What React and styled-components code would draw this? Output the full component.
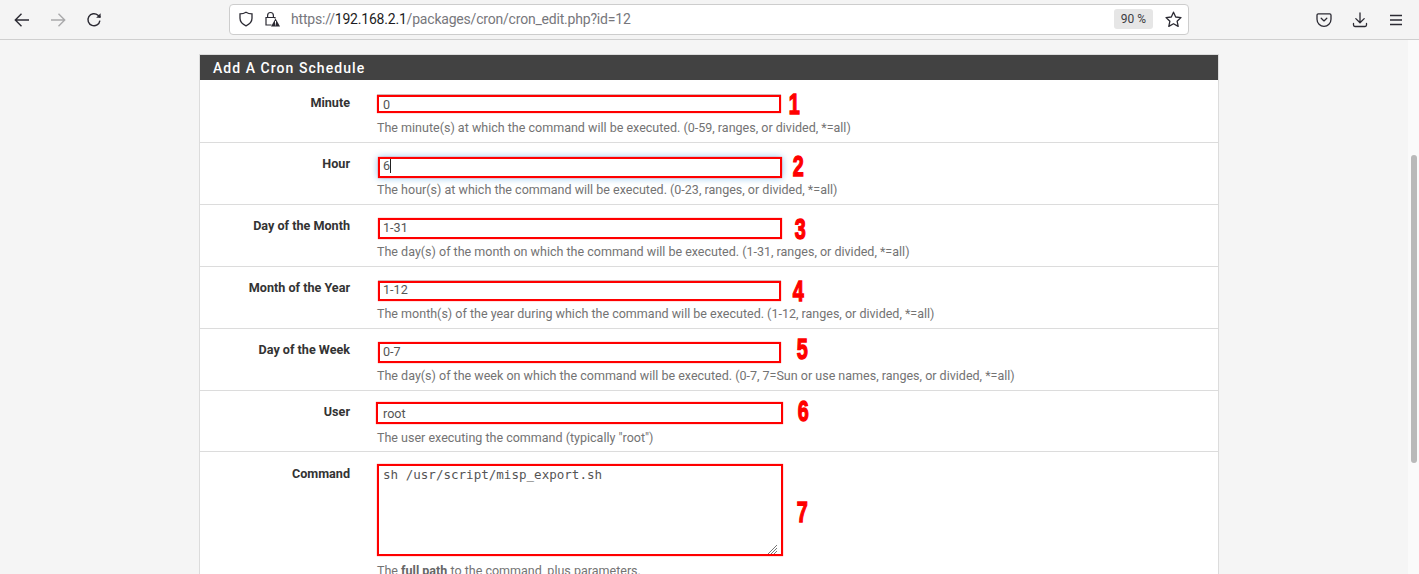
import React from "react";
import styled, { createGlobalStyle } from "styled-components";

const GlobalStyle = createGlobalStyle`
  html, body {
    margin: 0;
    padding: 0;
    height: 574px;
    overflow: hidden;
    background: #f5f5f5;
  }
  * { box-sizing: border-box; }
`;

const Window = styled.div`
  width: 1419px;
  height: 574px;
  display: flex;
  flex-direction: column;
  overflow: hidden;
  font-family: Roboto, "Liberation Sans", sans-serif;
`;

// browser chrome
const Toolbar = styled.header`
  height: 40px;
  flex: none;
  display: flex;
  align-items: center;
  background: #f4f4f4;
  border-bottom: 1px solid #cfcfcf;
  font-family: Roboto, "Noto Sans", sans-serif;
`;
const NavGroup = styled.nav`
  width: 229px;
  flex: none;
  display: flex;
  padding-left: 4px;
`;
const ToolButton = styled.span`
  width: 36px;
  height: 28px;
  display: flex;
  align-items: center;
  justify-content: center;
  color: ${(p) => (p.$off ? "#a9a9ab" : "#2b2a33")};
  svg { display: block; }
`;
const UrlBar = styled.div`
  width: 960px;
  height: 31px;
  flex: none;
  display: flex;
  align-items: center;
  margin-top: -1px;
  padding: 0 6px 0 8px;
  background: #fff;
  border: 1px solid #cdcdcd;
  border-radius: 4px;
`;
const UrlIcon = styled.span`
  width: ${(p) => p.$w}px;
  flex: none;
  display: flex;
  color: #2b2a33;
`;
const UrlText = styled.span`
  flex: 1;
  font-size: 14px;
  letter-spacing: -0.2px;
  color: #77777c;
  white-space: nowrap;
  b { font-weight: 400; color: #1d1c22; }
`;
const ZoomChip = styled.span`
  width: 39px;
  height: 20px;
  display: flex;
  align-items: center;
  justify-content: center;
  margin-right: 12px;
  border-radius: 3px;
  background: #e6e6e6;
  font-size: 12px;
  color: #3c3c42;
`;
const RightIcons = styled.div`
  flex: 1;
  display: flex;
  justify-content: flex-end;
  padding-right: 5px;
`;

// page below the toolbar
const Viewport = styled.div`
  flex: 1;
  min-height: 0;
  display: flex;
  overflow: hidden;
`;
const Content = styled.main`
  flex: 1;
  padding: 14px 189px 0 199px;
  overflow: hidden;
`;
const Scrollbar = styled.div`
  width: 11px;
  flex: none;
  padding: 115px 2px 0 3px;
  background: #fafafa;
`;
const ScrollThumb = styled.div`
  height: 308px;
  border-radius: 3px;
  background: #b9b9b9;
`;
const Panel = styled.section`
  background: #fff;
  border: 1px solid #dcdcdc;
  border-bottom: 0;
`;
const PanelTitle = styled.h2`
  height: 25px;
  margin: 0;
  padding: 5px 0 0 13px;
  background: #424242;
  color: #fff;
  font-size: 14px;
  line-height: 16px;
  font-weight: 500;
  letter-spacing: 1.05px;
`;
const Row = styled.div`
  height: ${(p) => p.$h}px;
  display: grid;
  grid-template-columns: 177px 1fr;
  border-top: ${(p) => (p.$first ? "0" : "1px solid #dcdcdc")};
`;
const Label = styled.label`
  padding: ${(p) => (p.$first ? "15px" : p.$low ? "14px" : "13px")} 27px 0 0;
  text-align: right;
  font-size: 12.6px;
  line-height: 16px;
  font-weight: 700;
  color: #333;
`;
const Field = styled.div`
  position: relative;
  padding-top: ${(p) => (p.$first ? "16px" : "14px")};
`;
const TextBox = styled.div`
  width: 403px;
  height: 18px;
  padding: 0 6px;
  font-size: 12.6px;
  line-height: 18px;
  color: #555;
`;
const Caret = styled.span`
  display: inline-block;
  width: 1px;
  height: 15px;
  vertical-align: -3px;
  background: #222;
`;
const AreaBox = styled.div`
  position: relative;
  width: 403px;
  height: 91px;
  padding: 1px 6px;
  font-family: "DejaVu Sans Mono", "Liberation Mono", monospace;
  font-size: 12.55px;
  line-height: 15px;
  color: #555;
`;
const Grip = styled.svg`
  position: absolute;
  right: 3px;
  bottom: 3px;
`;
const Help = styled.p`
  margin: ${(p) => (p.$tight ? "6px" : "7px")} 0 0;
  font-size: 12.52px;
  line-height: 16px;
  color: #737373;
  white-space: nowrap;
  b { font-weight: 700; color: #666; }
`;

// red markup drawn over the screenshot
const RedBox = styled.div`
  position: absolute;
  left: ${(p) => p.$x}px;
  top: ${(p) => p.$y}px;
  width: ${(p) => p.$w}px;
  height: ${(p) => p.$h}px;
  border: 2px solid #f00;
  pointer-events: none;
  box-shadow: ${(p) =>
    p.$focus
      ? "0 0 1px rgba(255, 0, 0, 0.7), 0 0 7px rgba(102, 175, 233, 0.75)"
      : p.$lined
      ? "0 0 1px rgba(255, 0, 0, 0.7), 0 -1px 0 #cfcfcf"
      : "0 0 1px rgba(255, 0, 0, 0.7)"};
`;
const Mark = styled.span`
  position: absolute;
  left: ${(p) => p.$x}px;
  top: ${(p) => p.$y}px;
  font-family: "Liberation Sans", sans-serif;
  font-size: 30px;
  line-height: 25px;
  font-weight: 700;
  color: #f00;
  -webkit-text-stroke: 1.4px #f00;
  transform: scaleX(0.66);
  transform-origin: center top;
`;

const fields = [
  { label: "Minute", value: "0", h: 62, box: [0, 15, 404, 18], lined: true, mark: [409, 11, "1"],
    help: "The minute(s) at which the command will be executed. (0-59, ranges, or divided, *=all)" },
  { label: "Hour", value: "6", caret: true, focus: true, h: 62, box: [1, 14, 404, 21], mark: [413, 10, "2"],
    help: "The hour(s) at which the command will be executed. (0-23, ranges, or divided, *=all)" },
  { label: "Day of the Month", value: "1-31", h: 62, box: [1, 13, 404, 21], mark: [415, 11, "3"],
    help: "The day(s) of the month on which the command will be executed. (1-31, ranges, or divided, *=all)" },
  { label: "Month of the Year", value: "1-12", h: 62, box: [1, 14, 403, 20], lined: true, mark: [413, 11, "4"],
    help: "The month(s) of the year during which the command will be executed. (1-12, ranges, or divided, *=all)" },
  { label: "Day of the Week", value: "0-7", h: 62, box: [1, 13, 403, 21], mark: [417, 7, "5"],
    help: "The day(s) of the week on which the command will be executed. (0-7, 7=Sun or use names, ranges, or divided, *=all)" },
  { label: "User", value: "root", h: 61, box: [-1, 11, 407, 22], mark: [418, 7, "6"],
    help: 'The user executing the command (typically "root")' },
];

const ArrowLeft = () => (
  <svg width="16" height="16" viewBox="0 0 16 16" fill="none" stroke="currentColor" strokeWidth="1.4">
    <path d="M15 8H1.5M7.5 1.8 1.3 8l6.2 6.2" />
  </svg>
);
const ArrowRight = () => (
  <svg width="16" height="16" viewBox="0 0 16 16" fill="none" stroke="currentColor" strokeWidth="1.4">
    <path d="M1 8h13.5M8.5 1.8 14.7 8l-6.2 6.2" />
  </svg>
);
const Reload = () => (
  <svg width="16" height="16" viewBox="0 0 16 16" fill="none" stroke="currentColor" strokeWidth="1.4">
    <path d="M13.9 8.6A6 6 0 1 1 12 3.3L14.4 5.4" />
    <path d="M14.6 1.2v4.5h-4.5" fill="currentColor" stroke="none" />
  </svg>
);
const Shield = () => (
  <svg width="16" height="16" viewBox="0 0 16 16" fill="none" stroke="currentColor" strokeWidth="1.3">
    <path d="M8 1.2c2 1.2 3.9 1.6 6 1.7v4.4c0 3.6-2.6 6-6 7.5-3.4-1.5-6-3.9-6-7.5V2.9c2.1-.1 4-.5 6-1.7Z" />
  </svg>
);
const LockWarn = () => (
  <svg width="16" height="16" viewBox="0 0 16 16" fill="none" stroke="currentColor" strokeWidth="1.2">
    <path d="M3.6 6.5V4.4a2.9 2.9 0 0 1 5.8 0v2.1" />
    <path d="M7.5 14H2V6.5h9v1" />
    <path d="M11.5 7.5 16 15.4H7Z" fill="currentColor" stroke="none" />
    <path d="M11.5 10v2.8M11.5 13.4v.9" stroke="#fff" strokeWidth="1" />
  </svg>
);
const Star = () => (
  <svg width="17" height="17" viewBox="0 0 17 17" fill="none" stroke="currentColor" strokeWidth="1.3" strokeLinejoin="round">
    <path d="M8.5 1.2 10.7 6l5.3.6-3.9 3.6 1.1 5.2-4.7-2.7-4.7 2.7 1.1-5.2L1 6.6 6.3 6Z" />
  </svg>
);
const Pocket = () => (
  <svg width="16" height="16" viewBox="0 0 16 16" fill="none" stroke="currentColor" strokeWidth="1.3" strokeLinecap="round" strokeLinejoin="round">
    <path d="M2.3 1.9h11.4c.7 0 1.3.6 1.3 1.3v4.1c0 3.9-3.1 7-7 7s-7-3.1-7-7V3.2c0-.7.6-1.3 1.3-1.3Z" />
    <path d="m5.2 6.3 2.8 2.6 2.8-2.6" />
  </svg>
);
const Download = () => (
  <svg width="16" height="16" viewBox="0 0 16 16" fill="none" stroke="currentColor" strokeWidth="1.3" strokeLinecap="round" strokeLinejoin="round">
    <path d="M8 1v9.5M3.8 6.6 8 10.8l4.2-4.2M1.5 11.5v1.6c0 .8.6 1.4 1.4 1.4h10.2c.8 0 1.4-.6 1.4-1.4v-1.6" />
  </svg>
);
const Menu = () => (
  <svg width="16" height="16" viewBox="0 0 16 16" fill="none" stroke="currentColor" strokeWidth="1.3">
    <path d="M2 3.5h12M2 8h12M2 12.5h12" />
  </svg>
);

export default function App() {
  return (
    <Window>
      <GlobalStyle />
      <Toolbar>
        <NavGroup>
          <ToolButton><ArrowLeft /></ToolButton>
          <ToolButton $off><ArrowRight /></ToolButton>
          <ToolButton><Reload /></ToolButton>
        </NavGroup>
        <UrlBar>
          <UrlIcon $w={26}><Shield /></UrlIcon>
          <UrlIcon $w={27}><LockWarn /></UrlIcon>
          <UrlText>https://<b>192.168.2.1</b>/packages/cron/cron_edit.php?id=12</UrlText>
          <ZoomChip>90 %</ZoomChip>
          <UrlIcon $w={17}><Star /></UrlIcon>
        </UrlBar>
        <RightIcons>
          <ToolButton><Pocket /></ToolButton>
          <ToolButton><Download /></ToolButton>
          <ToolButton><Menu /></ToolButton>
        </RightIcons>
      </Toolbar>
      <Viewport>
        <Content>
          <Panel>
            <PanelTitle>Add A Cron Schedule</PanelTitle>
            {fields.map((f, i) => (
              <Row key={f.label} $h={f.h} $first={i === 0}>
                <Label $first={i === 0}>{f.label}</Label>
                <Field $first={i === 0}>
                  <TextBox>{f.value}{f.caret && <Caret />}</TextBox>
                  <Help $tight={i === 0}>{f.help}</Help>
                  <RedBox
                    $x={f.box[0]}
                    $y={f.box[1]}
                    $w={f.box[2]}
                    $h={f.box[3]}
                    $focus={f.focus}
                    $lined={f.lined}
                  />
                  <Mark $x={f.mark[0]} $y={f.mark[1]}>{f.mark[2]}</Mark>
                </Field>
              </Row>
            ))}
            <Row $h={140}>
              <Label $low>Command</Label>
              <Field>
                <AreaBox>
                  sh /usr/script/misp_export.sh
                  <Grip width="9" height="9" viewBox="0 0 9 9" stroke="#777" strokeWidth="1">
                    <path d="M0 9 9 0M3 9l6-6M6 9l3-3" />
                  </Grip>
                </AreaBox>
                <Help $tight>The <b>full path</b> to the command, plus parameters.</Help>
                <RedBox $x={0} $y={12} $w={406} $h={92} />
                <Mark $x={417} $y={47}>7</Mark>
              </Field>
            </Row>
          </Panel>
        </Content>
        <Scrollbar><ScrollThumb /></Scrollbar>
      </Viewport>
    </Window>
  );
}
